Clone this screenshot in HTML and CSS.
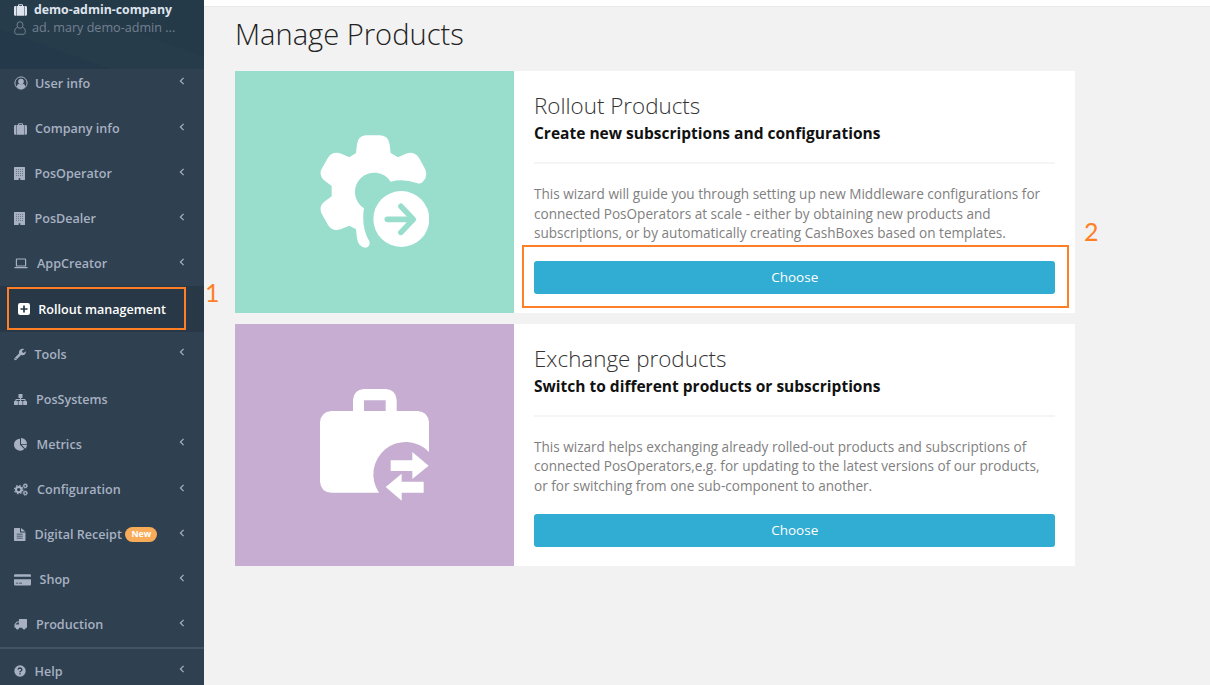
FILE: index.html
```html
<!DOCTYPE html>
<html lang="en">
<head>
<meta charset="utf-8">
<title>Manage Products</title>
<link rel="stylesheet" href="styles.css">
</head>
<body>
<svg class="defs" aria-hidden="true">
  <symbol id="chevron" viewBox="0 0 6 8"><path d="M4.600 .8 1.400 4l3.200 3.200" fill="none" stroke="currentColor" stroke-width="1.200"/></symbol>
  <symbol id="suitcase" viewBox="0 0 13 12"><path d="M4 2V1.200Q4 .2 5 .2h3q1 0 1 1V2h1v9.800H3V2zm1 0h3v-.8H5zM2.500 2v9.800H1.400Q0 11.800 0 10.400v-7Q0 2 1.400 2zM10.500 2h1.100Q13 2 13 3.400v7q0 1.400-1.400 1.400h-1.100z" fill-rule="evenodd"/></symbol>
  <symbol id="building" viewBox="0 0 11 13"><path fill-rule="evenodd" d="M.6 0h9.800q.6 0 .6.600v11.800q0 .6-.6.600H6.300v-1.700H4.700V13H.6q-.6 0-.6-.6V.6Q0 0 .6 0z"/><path d="M2 2.500h7M2 4.500h7M2 6.500h7M2 8.500h7" stroke="#2f4050" stroke-opacity=".6" stroke-width=".8" stroke-dasharray="1 1"/></symbol>
</svg>
<div class="app">
  <nav class="sidebar">
    <header class="profile">
      <div class="company"><svg width="13" height="12"><use href="#suitcase"/></svg><span>demo-admin-company</span></div>
      <div class="person"><svg width="12" height="14" viewBox="0 0 12 14"><path d="M3.300 6.300C1.500 7 .7 8.500.7 10.700.7 12.500 1.500 13.300 3 13.300h6c1.500 0 2.300-.8 2.300-2.600 0-2.200-.8-3.700-2.600-4.400M9 4a3 3.300 0 1 1-6 0 3 3.300 0 0 1 6 0z" fill="none" stroke="currentColor"/></svg><span>ad. mary demo-admin ...</span></div>
    </header>
    <ul class="menu">
      <li class="item"><svg width="14" height="14" viewBox="0 0 14 14"><circle cx="7" cy="7" r="6.100" fill="none" stroke="currentColor" stroke-width="1"/><circle cx="7" cy="5.600" r="2.800"/><path d="M2.500 10.800Q3 8 5 7.700q2 1.300 4 0 2 .3 2.500 3.100Q9.500 13.200 7 13.200t-4.500-2.400z"/></svg><span>User info</span><svg class="chev"><use href="#chevron"/></svg></li>
      <li class="item"><svg class="w-14" width="13" height="12"><use href="#suitcase"/></svg><span>Company info</span><svg class="chev"><use href="#chevron"/></svg></li>
      <li class="item"><svg class="w-11" width="11" height="13"><use href="#building"/></svg><span>PosOperator</span><svg class="chev"><use href="#chevron"/></svg></li>
      <li class="item"><svg class="w-11" width="11" height="13"><use href="#building"/></svg><span>PosDealer</span><svg class="chev"><use href="#chevron"/></svg></li>
      <li class="item wide"><svg width="14" height="11" viewBox="0 0 14 11"><path d="M3 1h8q.6 0 .6.600v5.800q0 .6-.6.600H3q-.6 0-.6-.6V1.600Q2.400 1 3 1z" fill="none" stroke="currentColor" stroke-width="1.200"/><path d="M.3 9h13.400v.6q0 .7-.8.700H1.100q-.8 0-.8-.7z"/></svg><span>AppCreator</span><svg class="chev"><use href="#chevron"/></svg></li>
      <li class="item active"><svg width="12" height="12" viewBox="0 0 12 12"><rect width="12" height="12" rx="2.200"/><path d="M6 2.500v7M2.500 6h7" stroke="#293846" stroke-width="1.700"/></svg><span>Rollout management</span><i class="mark mark-menu"></i><b class="step step-one">1</b></li>
      <li class="item"><svg class="w-13" width="12" height="13" viewBox="0 0 12 13"><path fill-rule="evenodd" d="M11.800 3.300Q12 7 8.500 7.200L7 7l-4.600 4.700Q1.400 12.500.6 11.800q-.8-.9 0-1.700L5 5.500Q4.600 1.500 8.200.8q1.300-.2 2.300.3L8.200 2.600v1.500l1.300.8zM1.900 10.100a.5.500 0 1 0 0 1 .5.500 0 0 0 0-1z"/></svg><span>Tools</span><svg class="chev"><use href="#chevron"/></svg></li>
      <li class="item mid"><svg width="13" height="11" viewBox="0 0 13 11"><rect x="4.500" width="4" height="3.900" rx=".5"/><rect y="7" width="3.900" height="3.900" rx=".5"/><rect x="4.500" y="7" width="4" height="3.900" rx=".5"/><rect x="9.100" y="7" width="3.900" height="3.900" rx=".5"/><path d="M6.500 3v5M1.900 8V5.500h9.200V8" fill="none" stroke="currentColor" stroke-width="1"/></svg><span>PosSystems</span></li>
      <li class="item metrics"><svg width="13" height="13" viewBox="0 0 13 13"><path d="M6 .7V6.700L10.200 11A6 6 0 1 1 6 .7zM7 0A6 6 0 0 1 13 6H7zM7.500 6.800H13a6 6 0 0 1-1.700 3.900z"/></svg><span>Metrics</span><svg class="chev"><use href="#chevron"/></svg></li>
      <li class="item wide"><svg width="14" height="13" viewBox="0 0 14 13"><g fill="none" stroke="currentColor"><circle cx="4.700" cy="6.600" r="2.700" stroke-width="2"/><circle cx="4.700" cy="6.600" r="4.100" stroke-width="1.300" stroke-dasharray="1.610"/><circle cx="11.300" cy="2.900" r="1.500" stroke-width="1.300"/><circle cx="11.300" cy="2.900" r="2.300" stroke-width=".8" stroke-dasharray=".9"/><circle cx="11.300" cy="10.100" r="1.500" stroke-width="1.300"/><circle cx="11.300" cy="10.100" r="2.300" stroke-width=".8" stroke-dasharray=".9"/></g></svg><span>Configuration</span><svg class="chev"><use href="#chevron"/></svg></li>
      <li class="item"><svg class="w-13" width="12" height="13" viewBox="0 0 12 13"><path fill-rule="evenodd" d="M.7 0H6v4.500h5.500v7.800q0 .7-.7.700H.7q-.7 0-.7-.7V.7Q0 0 .7 0zM7 0l4.500 3.600H7zM2.700 5.700v.8h6v-.8zm0 2v.8h6v-.8zm0 2v.8h6v-.8z"/></svg><span>Digital Receipt</span><em class="badge">New</em><svg class="chev"><use href="#chevron"/></svg></li>
      <li class="item shop"><svg width="17" height="12" viewBox="0 0 17 12"><path fill-rule="evenodd" d="M1.200.3h14.600q1.200 0 1.200 1.200v1.300H0V1.500Q0 .3 1.200.3zM0 5.300h17v5q0 1.200-1.200 1.200H1.200Q0 11.500 0 10.300zM1.800 8.700v.8H4v-.8zm3 0v.8H8v-.8z"/></svg><span>Shop</span><svg class="chev"><use href="#chevron"/></svg></li>
      <li class="item mid"><svg width="13" height="11" viewBox="0 0 13 11"><path fill-rule="evenodd" d="M5.500 0H12.400q.6 0 .6.600v8.200h-1.200a1.800 1.800 0 0 1-3.500 0H5.200a1.800 1.800 0 0 1-3.500 0H.5V5.300L2.800 2.600h2.100V.6q0-.6.600-.6zM3.200 3.500 1.500 5.400h3.400V3.500z"/><circle cx="3.450" cy="9.200" r="1.200"/><circle cx="10.050" cy="9.200" r="1.200"/></svg><span>Production</span><svg class="chev"><use href="#chevron"/></svg></li>
      <li class="item help"><svg class="w-13" width="12" height="12" viewBox="0 0 12 12"><circle cx="6" cy="6" r="5.700"/><path d="M4 4.500Q4.300 3 6 3q1.900.1 1.900 1.600 0 .9-1 1.400T6 7.300" fill="none" stroke="#2f4050" stroke-width="1.300"/><path d="M5.300 8.200h1.400v1.400H5.300z" fill="#2f4050"/></svg><span>Help</span><svg class="chev"><use href="#chevron"/></svg></li>
    </ul>
  </nav>
  <main class="content">
    <div class="topbar"></div>
    <h1 class="title">Manage Products</h1>
    <section class="card">
      <div class="art art-rollout">
        <svg width="109.300" height="112.700" viewBox="60 46 328 338"><path d="M198 47H240Q266 48 269 74L272 100 294 113 318 102Q342 93 357 114L375 147Q385 168 370 185 362 195 350 190 310 176 272 186A58 58 0 1 0 192 266Q183 322 208 365 212 380 198 384 175 384 171 356L168 329 148 318 124 328Q98 338 84 316L66 284Q54 260 75 245L95 230V199L75 184Q54 167 66 146L84 114Q98 92 124 102L148 113 168 100 171 74Q174 48 198 47Z"/><circle cx="304" cy="298" r="84"/><path d="M262 299H338M303 260 340 299 303 338" fill="none" stroke="#99decc" stroke-width="17" stroke-linecap="round" stroke-linejoin="round"/></svg>
      </div>
      <div class="body">
        <h2 class="name">Rollout Products</h2>
        <p class="lead">Create new subscriptions and configurations</p>
        <p class="text">This wizard will guide you through setting up new Middleware configurations for<br>connected PosOperators at scale - either by obtaining new products and<br>subscriptions, or by automatically creating CashBoxes based on templates.</p>
        <button class="choose">Choose<i class="mark mark-choose"></i><b class="step step-two">2</b></button>
      </div>
    </section>
    <section class="card">
      <div class="art art-exchange">
        <svg width="109" height="111.700" viewBox="60 41 327 335"><path fill-rule="evenodd" d="M94 107H159V73Q161 44 191 41H258Q288 44 290 73V107H353Q384 109 387 141V230A97 97 0 0 0 237 352H94Q62 350 60 319V141Q62 110 94 107ZM192 75V107H257V75Z"/><path d="M272 255H337V230L386 271 337 311V287H272ZM371 319V352H305V376L257 335 305 295V319Z"/></svg>
      </div>
      <div class="body">
        <h2 class="name">Exchange products</h2>
        <p class="lead">Switch to different products or subscriptions</p>
        <p class="text">This wizard helps exchanging already rolled-out products and subscriptions of<br>connected PosOperators,e.g. for updating to the latest versions of our products,<br>or for switching from one sub-component to another.</p>
        <button class="choose">Choose</button>
      </div>
    </section>
  </main>
</div>
</body>
</html>
```

FILE: styles.css
```css
* { box-sizing: border-box; }
body { margin: 0; font-family: "Open Sans", "Noto Sans", sans-serif; background: #f2f2f2; }
svg { fill: currentColor; flex: none; }
.defs { display: none; }
.app { display: flex; width: 1210px; height: 685px; overflow: hidden; }

.sidebar { width: 203.500px; flex: none; background: #2f4050; color: #a7b1c2; font-size: 12.600px; font-weight: 600; }
.profile { height: 69px; padding: 1px 0 0 14px; background: linear-gradient(20deg, #243949 0 28%, #273c4b 28% 60%, #253a49 60%); line-height: 18px; }
.company, .person { display: flex; align-items: center; white-space: nowrap; }
.company { gap: 7px; color: #dfe4ed; font-weight: 700; font-size: 12.300px; }
.person { gap: 6px; color: #72808f; font-weight: 400; }
.menu { list-style: none; margin: -8.200px 0 0; padding: 0; }
.item { position: relative; display: flex; align-items: center; height: 45.130px; padding: 0 18.500px 0 14px; gap: 7px; white-space: nowrap; }
.item.wide, .item.mid { gap: 9px; }
.item.metrics { gap: 9.600px; }
.item.shop { gap: 8.500px; }
.w-11 { margin-right: 2.500px; }
.w-13 { margin-right: 1.500px; }
.w-14 { margin-right: 1px; }
.item.active { background: #293846; color: #fff; padding-left: 18px; gap: 8.300px; }
.item.help { height: 46px; border-top: 2px solid #435466; }
.chev { width: 6px; height: 8px; margin: -4px 0 0 auto; }
.badge { margin-left: -3.500px; padding: 0 6px; border-radius: 8px; background: #f8ac59; color: #fff; font: 700 8.700px/15px "Open Sans", sans-serif; }

.mark { position: absolute; border: 2px solid #ff7f27; }
.mark-menu { left: 7px; top: .5px; width: 179px; height: 43px; }
.step { position: absolute; color: #ff7f27; font: 400 25px/30px Lato, sans-serif; }
.step-one { left: 205px; top: -9.500px; }

.content { flex: 1; }
.topbar { height: 7px; background: #fff; border-bottom: 1px solid #e7eaec; }
.title { margin: 0 0 0 31.500px; height: 63.700px; font-size: 29.100px; font-weight: 300; line-height: 54px; color: #222; }
.card { display: flex; width: 840.300px; height: 242.300px; margin: 0 0 10.600px 31.200px; background: #fff; }
.art { display: flex; width: 279.800px; flex: none; align-items: center; justify-content: center; color: #fff; }
.art-rollout { background: #99decc; }
.art-exchange { background: #c6add1; }
.body { flex: 1; padding: 19.500px; }
.name { margin: 0; font-size: 22.400px; font-weight: 300; line-height: 32px; color: #333; }
.lead { margin: 0; height: 42px; border-bottom: 2px solid #f5f5f5; font-size: 15.530px; font-weight: 700; line-height: 23px; color: #111; }
.text { margin: 20px 0 18.500px; font-size: 13.580px; line-height: 19.350px; color: #808080; white-space: nowrap; }
.choose { position: relative; display: block; width: 100%; height: 33px; padding: 0; border: 0; border-radius: 3px; background: #31acd2; color: #fff; font: 13.500px/33px "Open Sans", sans-serif; }
.mark-choose { left: -12px; top: -16px; width: 547px; height: 63px; }
.step-two { left: 550px; top: -45px; }
```
